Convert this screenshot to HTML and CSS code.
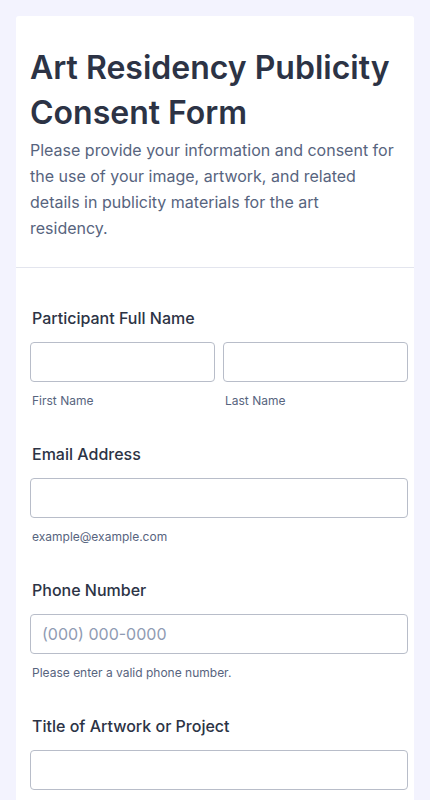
FILE: index.html
```html
<!DOCTYPE html>
<html lang="en">
<head>
<meta charset="utf-8">
<title>Art Residency Publicity Consent Form</title>
<link rel="stylesheet" href="styles.css">
</head>
<body>
<main class="card">
  <header class="form-header">
    <h1 class="form-title">Art Residency Publicity Consent Form</h1>
    <p class="form-desc">Please provide your information and consent for the use of your image, artwork, and related details in publicity materials for the art residency.</p>
  </header>
  <div class="fields">
    <div class="field">
      <label class="label">Participant Full Name</label>
      <div class="name-row">
        <div class="name-col">
          <input class="input" type="text">
          <span class="sublabel">First Name</span>
        </div>
        <div class="name-col">
          <input class="input" type="text">
          <span class="sublabel">Last Name</span>
        </div>
      </div>
    </div>
    <div class="field">
      <label class="label">Email Address</label>
      <input class="input" type="email">
      <span class="sublabel">example@example.com</span>
    </div>
    <div class="field">
      <label class="label">Phone Number</label>
      <input class="input" type="tel" placeholder="(000) 000-0000">
      <span class="sublabel">Please enter a valid phone number.</span>
    </div>
    <div class="field">
      <label class="label">Title of Artwork or Project</label>
      <input class="input" type="text">
    </div>
  </div>
</main>
</body>
</html>
```

FILE: styles.css
```css
* { box-sizing: border-box; }
html, body {
  margin: 0;
  padding: 0;
  background: #f3f3fe;
  font-family: Inter, "Noto Sans", sans-serif;
  color: #2c3345;
}
body {
  padding: 16px 16px 0 16px;
}
.card {
  background: #ffffff;
  border-radius: 3px 3px 0 0;
  width: 398px;
  min-height: 800px;
}
.form-header {
  padding: 29px 14px 26px 14px;
  border-bottom: 1px solid #e3e5ee;
}
.form-title {
  margin: 0;
  font-size: 32px;
  line-height: 45px;
  font-weight: 600;
  color: #2c3345;
}
.form-desc {
  margin: 2px 0 0 0;
  font-size: 16px;
  line-height: 26px;
  color: #57647e;
  font-weight: 400;
}
.fields {
  padding: 22px 6px 0 14px;
}
.field {
  display: flex;
  flex-direction: column;
  padding: 16px 0;
}
.label {
  font-size: 16px;
  line-height: 24px;
  font-weight: 500;
  color: #2c3345;
  padding-left: 2px;
  margin-bottom: 12px;
}
.name-row {
  display: flex;
  gap: 8px;
}
.name-col {
  flex: 1;
  display: flex;
  flex-direction: column;
}
.input {
  display: block;
  width: 100%;
  height: 40px;
  border: 1px solid #b8bdc9;
  border-radius: 4px;
  padding: 0 11px;
  font-family: Inter, "Noto Sans", sans-serif;
  font-size: 16px;
  color: #2c3345;
  background: #ffffff;
}
.input::placeholder {
  color: #8f9bb3;
}
.sublabel {
  font-size: 12px;
  line-height: 18px;
  margin-top: 10px;
  padding-left: 2px;
  color: #57647e;
}
```
